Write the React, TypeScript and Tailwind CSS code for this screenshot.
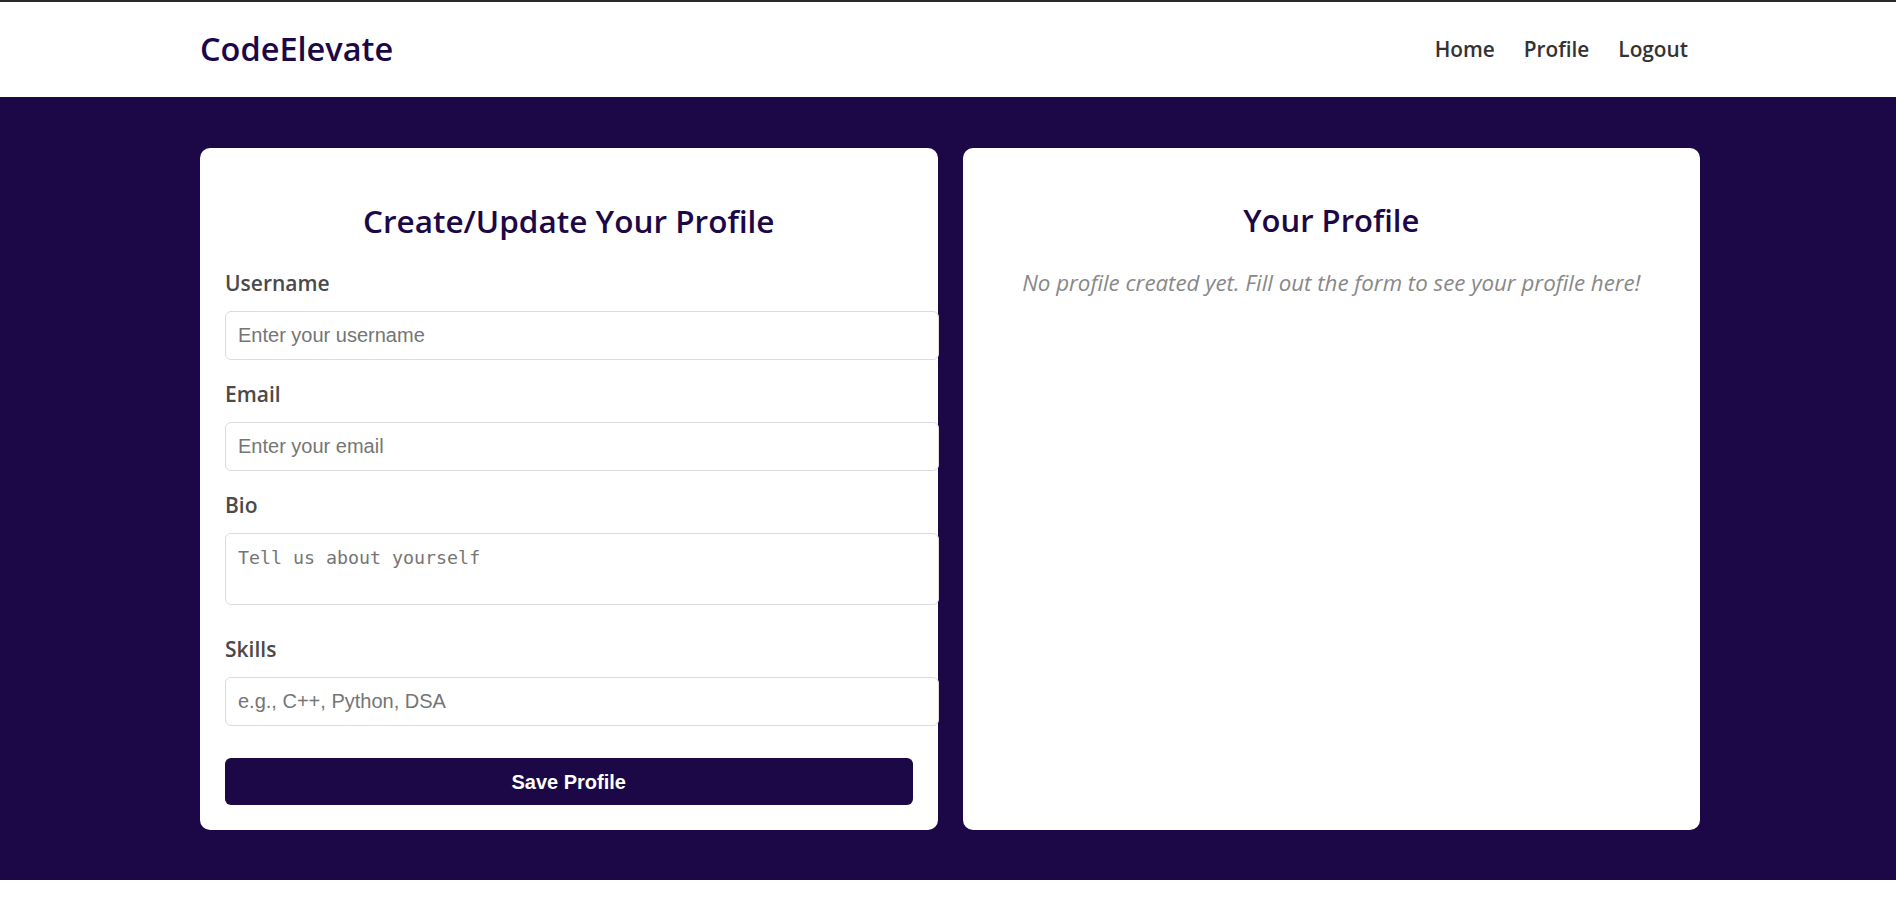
import React from "react";

function Field({
  label,
  placeholder,
  textarea,
}: {
  label: string;
  placeholder: string;
  textarea?: boolean;
}) {
  return (
    <div className={textarea ? "mb-[29px]" : "mb-[19px]"}>
      <label className="block h-[30px] leading-[30px] mb-[13px] font-['Open_Sans','Noto_Sans',sans-serif] text-[21px] font-semibold text-[#4a4a4a]">
        {label}
      </label>
      {textarea ? (
        <textarea
          placeholder={placeholder}
          className="block box-content w-full h-[46px] px-[12px] py-[12px] border border-[#dcdcdc] rounded-[6px] bg-white font-['DejaVu_Sans_Mono','Liberation_Mono',monospace] text-[18.3px] leading-[23px] placeholder:text-[#757575] resize-none outline-none"
        />
      ) : (
        <input
          type="text"
          placeholder={placeholder}
          className="block box-content w-full h-[23px] px-[12px] py-[12px] border border-[#dcdcdc] rounded-[6px] bg-white font-['Liberation_Sans',Arial,sans-serif] text-[20px] leading-[23px] placeholder:text-[#757575] outline-none"
        />
      )}
    </div>
  );
}

export default function App() {
  return (
    <div className="min-h-[919px] bg-white border-t-2 border-[#2a2a2a]">
      <header className="h-[95px] bg-white">
        <div className="w-[1500px] ml-[200px] h-full flex items-center justify-between">
          <div className="font-['Open_Sans','Noto_Sans',sans-serif] text-[32.5px] font-semibold text-[#1c0846]">
            CodeElevate
          </div>
          <nav className="flex items-center gap-[29px] pr-[12px] font-['Open_Sans','Noto_Sans',sans-serif] text-[20.8px] font-semibold text-[#333333]">
            <a href="#">Home</a>
            <a href="#">Profile</a>
            <a href="#">Logout</a>
          </nav>
        </div>
      </header>

      <main className="bg-[#1c0846] pt-[51px] pb-[50px]">
        <div className="w-[1500px] ml-[200px] grid grid-cols-2 gap-[25px]">
          <section className="bg-white rounded-[10px] p-[25px]">
            <h2 className="mt-[25px] mb-[25px] h-[45px] leading-[45px] text-center font-['Open_Sans','Noto_Sans',sans-serif] text-[31.5px] font-semibold text-[#1c0846]">
              Create/Update Your Profile
            </h2>
            <Field label="Username" placeholder="Enter your username" />
            <Field label="Email" placeholder="Enter your email" />
            <Field label="Bio" placeholder="Tell us about yourself" textarea />
            <Field label="Skills" placeholder="e.g., C++, Python, DSA" />
            <button className="block w-full mt-[32px] h-[47px] rounded-[6px] bg-[#1c0846] text-white font-['Liberation_Sans',Arial,sans-serif] text-[20px] font-bold">
              Save Profile
            </button>
          </section>

          <section className="bg-white rounded-[10px] p-[25px]">
            <h2 className="mt-[25px] mb-[25px] h-[45px] leading-[45px] text-center font-['Open_Sans','Noto_Sans',sans-serif] text-[31px] font-semibold text-[#1c0846]">
              Your Profile
            </h2>
            <p className="text-center italic font-['Open_Sans','Noto_Sans',sans-serif] text-[22.3px] leading-[30px] text-[#888888]">
              No profile created yet. Fill out the form to see your profile here!
            </p>
          </section>
        </div>
      </main>
    </div>
  );
}
